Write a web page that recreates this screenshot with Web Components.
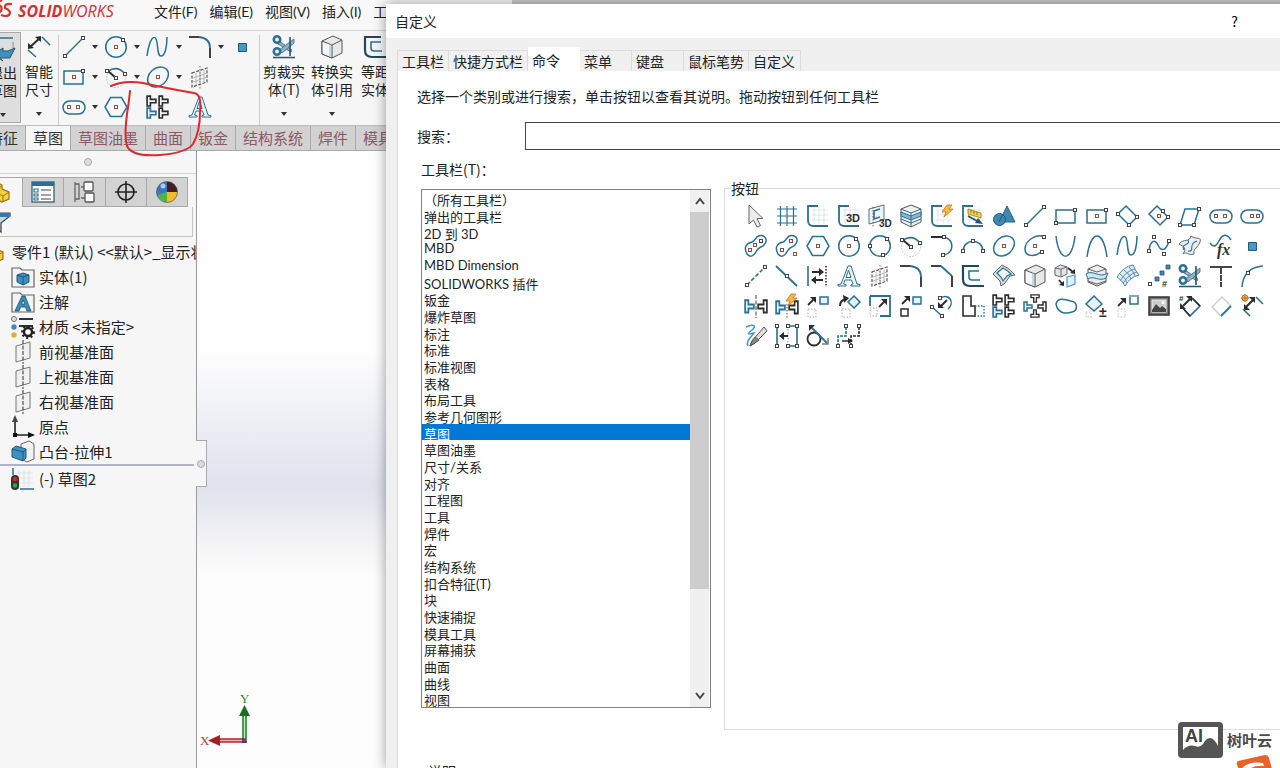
<!DOCTYPE html>
<html lang="zh-CN">
<head>
<meta charset="utf-8">
<title>SOLIDWORKS</title>
<style>
  body {
    margin: 0;
    font-family: "Noto Sans CJK SC", sans-serif;
    font-size: 14px;
    line-height: 20px;
    color: #222;
  }
</style>
</head>
<body>
<cad-app></cad-app>

<script>
const BLUE = '#2b7093';
const DARK = '#2c2c2c';

// drawing helpers, every icon lives in a 24x24 box
const line = (d, color = BLUE, width = 1.5, extra = '') =>
  `<path d="${d}" fill="none" stroke="${color}" stroke-width="${width}" ${extra}/>`;
const fill = (d, color, stroke = 'none', width = 1) =>
  `<path d="${d}" fill="${color}" stroke="${stroke}" stroke-width="${width}"/>`;
const grip = (...pts) => pts.map(([x, y]) =>
  `<rect x="${x - 1.5}" y="${y - 1.5}" width="3" height="3" fill="#fff" stroke="#444" stroke-width="1"/>`).join('');
const centre = (x, y) => `<rect x="${x - 1.5}" y="${y - 1.5}" width="3" height="3" fill="#fff" stroke="#8a4f46" stroke-width="1"/>`;
const label = (x, y, text, size = 9) =>
  `<text x="${x}" y="${y}" font-family="Liberation Sans, sans-serif" font-weight="bold" font-size="${size}" fill="${DARK}">${text}</text>`;
const bolt = (x, y) => fill(`M${x + 6} ${y}h5l-3 4h4l-9 8l2-5h-4z`, '#f6b93a', '#c1732a', .8);
const dots = 'stroke-dasharray="1.5 1.5"';
const grid = line('M6 6H22M6 11H22M6 16H22M8 3V20M13 3V20M18 3V20', '#d5dde2', .7);
const arrowNE = (x, y) => line(`M${x} ${y + 8}L${x + 6} ${y + 2}`, DARK, 1.8) + fill(`M${x + 8} ${y}v6l-6-6z`, DARK);
const sketchBase = line('M12 2H2V16.500Q2 22 7.500 22H22', BLUE, 1.8);
const tee = (t, c, f = 'none') =>
  `<path transform="${t}" d="M1 1h3v3h5v3h-5v3h-3z" fill="${f}" stroke="${c}" stroke-width="1.500"/>`;
const cubeBox = (x, y, s) =>
  fill(`M${x} ${y + s * .25}L${x + s * .45} ${y}L${x + s} ${y + s * .15}V${y + s * .75}L${x + s * .5} ${y + s}L${x} ${y + s * .85}Z`, '#e2e4e6', '#666', 1) +
  line(`M${x} ${y + s * .25}L${x + s * .5} ${y + s * .35}L${x + s} ${y + s * .15}M${x + s * .5} ${y + s * .35}V${y + s}`, '#666', 1);
const kidney = 'M3 20C-1 13 3 9 8 8C12 7 11 2 16 1.500C22 1 24 7 20 11C17 14 15 12 12.500 17C10 22 6 24 3 20Z';
const scissors =
  fill('M7 6L20 15L19 17L6 9Z', '#8fb3c6', '#3b687f', .8) + fill('M7 15L22 4L22 8L10 18Z', '#8fb3c6', '#3b687f', .8) +
  `<circle cx="5" cy="4.500" r="3.200" fill="none" stroke="${BLUE}" stroke-width="2.600"/><circle cx="5" cy="16.500" r="3.200" fill="none" stroke="${BLUE}" stroke-width="2.600"/>` +
  line('M18 2V21M1 22.500H23', '#28536b', 1.6);
const dimension = (c1, c2) => line('M3 12L13 3', c1, 2) + fill('M14 1v6l-6-5z', c1) + fill('M1 14V8l6 5z', c1) + line('M15 2L23 10M1 15L9 22', c2, 1.6);
const plane = (c) => fill('M5 6L19 2V18L5 22Z', '#f1f1f1', c, 1);

const ICONS = {
  select: fill('M5 1V20L9.500 16L13 23L16.500 21.500L13 14.500H19Z', '#ececec', '#666', 1),
  grid: line('M2 5H22M2 12H22M2 19H22M5.500 2V22M12 2V22M18.500 2V22', BLUE, 1.2),
  sketch: grid + sketchBase,
  sketch3d: grid + sketchBase + label(9, 18, '3D', 11),
  plane3d: fill('M1 5L16 1V16L1 20Z', '#eef3f6', '#557080') + line('M12 5L6 7V15L12 13', BLUE, 1.6) + line('M5 3V23', '#444', .8, dots) + label(11, 23, '3D', 10),
  layers: fill('M2 5L12 1L22 5V18L12 23L2 18Z', '#eaf1f5', '#555') + fill('M2 8L12 12L22 8V12L12 16L2 12Z', '#85b8d2', BLUE) + line('M2 5L12 9L22 5M12 9V23M2 15L12 19L22 15', '#467', 1),
  rapid: grid + sketchBase + bolt(11, 1),
  instant: grid + sketchBase + fill('M7 5L20 9V14L7 10Z', '#f5cf4b', '#9b7b19', .8) + line('M10 6v3M13 7v3M16 8v3', '#7a6016', .8) + line('M7 12L18 18', '#28536b', 1.8) + fill('M22 20L14 19L17 14Z', '#28536b'),
  shapes: fill('M15 2L23 18H7Z', '#3d88b4', '#2b6387') + `<circle cx="7.500" cy="15.500" r="6" fill="#3d88b4" stroke="#225877"/>` + line('M7 18L11 10', '#225877', 1),
  line: line('M2 22L21 3') + grip([3, 21], [21, 3]),
  rect: `<rect x="2" y="6" width="19" height="13" fill="none" stroke="${BLUE}" stroke-width="1.500"/>` + grip([2, 19], [21, 6]),
  rectc: `<rect x="2" y="6" width="19" height="13" fill="none" stroke="${BLUE}" stroke-width="1.500"/>` + centre(12, 12) + grip([21, 6]),
  rect3: line('M10 2L21 13L13 21L2 10Z') + grip([2, 10], [21, 13], [13, 21]),
  rect3c: line('M10 2L21 13L13 21L2 10Z') + centre(12, 12) + grip([16, 7], [21, 13]),
  para: line('M7 5H21L16 21H2Z') + grip([21, 5], [2, 21], [16, 21]),
  slot: `<rect x="1" y="6" width="22" height="13" rx="6.500" fill="none" stroke="${BLUE}" stroke-width="1.500"/>` + centre(7, 12) + centre(16, 12),
  slotc: `<rect x="1" y="6" width="22" height="13" rx="6.500" fill="none" stroke="${BLUE}" stroke-width="1.500"/>` + centre(12, 12) + centre(18, 12),
  kidney: line(kidney) + centre(6, 16) + centre(11, 11) + grip([17, 7]),
  kidney2: line(kidney) + centre(7, 16) + centre(16, 7) + centre(20, 20),
  polygon: line('M6.500 2.500H17.500L23 12L17.500 21.500H6.500L1 12Z') + centre(12, 12),
  circle: `<circle cx="12" cy="12" r="10.300" fill="none" stroke="${BLUE}" stroke-width="1.500"/>` + centre(12, 12) + grip([19, 5]),
  circle3: `<circle cx="12" cy="12" r="10.300" fill="none" stroke="${BLUE}" stroke-width="1.500"/>` + grip([2, 12], [19, 5], [15, 21]),
  arcc: `<circle cx="12" cy="13" r="9.500" fill="none" stroke="#bbb" ${dots}/>` + line('M4 6Q14 0 21 9') + line('M4 6L12 13', DARK, 2) + grip([3, 6], [12, 13], [21, 9]),
  arct: line('M1 3H14', DARK, 2) + line('M14 3C25 6 24 19 14 21') + grip([14, 3], [13, 21]),
  arc3: line('M2 17C3 4 21 4 22 17') + grip([2, 17], [12, 7], [22, 17]),
  ellipse: `<ellipse cx="12" cy="12" rx="11.500" ry="8.800" transform="rotate(-42 12 12)" fill="none" stroke="${BLUE}" stroke-width="1.500"/>` + centre(12, 12),
  pellipse: line('M21 3C13 -1 2 7 2 15C2 23 12 23 18 18') + centre(12, 12) + grip([21, 3], [19, 18]),
  parabola: line('M2 2C5 29 18 29 21 2'),
  conic: line('M2 23C6 -5 18 -5 22 23'),
  spline: line('M1 21C2 12 5 2 8.500 2.500C13 3 10 21 15 21C19 21 21 12 21 2'),
  splineh: line('M2 17C3 7 8 4 11 11C14 18 19 17 22 7') + grip([2, 17], [7, 3], [17, 20], [22, 7]),
  surf: fill('M1 10C6 4 11 9 13 2C18 6 24 2 22 8C20 14 15 14 16 20C10 22 9 17 5 20C9 14 6 13 1 10Z', '#eceff1', '#667', 1) + line('M6 16C2 9 13 12 10 6M10 17C18 18 9 10 19 7', BLUE, 1.2),
  equation: line('M1 9C5 15 8 11 11 5C15 -1 19 1 22 6') + `<text x="8" y="21" font-family="Liberation Serif, serif" font-style="italic" font-weight="bold" font-size="16" fill="#333">fx</text>`,
  point: fill('M8.500 8.500H16.500V16.500H8.500Z', '#4897c4', '#1f5b7e'),
  centerline: line('M3 21L21 3', BLUE, 1.6, 'stroke-dasharray="4 2"') + grip([3, 21], [21, 3]),
  midline: line('M1 2L22 22', BLUE, 1.8) + grip([12, 12]),
  between: line('M2 2V22', BLUE, 1.6) + line('M20 2V22', DARK, 1.5, dots) + line('M6 8H14M9 16H17', DARK, 2) + fill('M13 4L18 8L13 12Z', DARK) + fill('M10 12L5 16L10 20Z', DARK),
  text: fill('M1 22V20.500L4 20L11 2H14L20 20L23 20.500V22H14V20.500L16 20L14.500 16H8L6.500 20L9 20.500V22ZM9 13.500H14L11.500 6Z', '#eef5f9', BLUE, 1),
  plane: line('M4 8L19 3V17L4 22Z', '#555', 1.2, 'stroke-dasharray="3 1.500"') + line('M8 8V20M12 6V19M16 5V17M5 13L19 8M5 17L19 12', '#aaa', .8) + line('M12 1V24', '#555', .8, dots),
  fillet: line('M1 2H11', DARK, 1.8) + line('M11 2Q22 3 22 13', BLUE, 1.8) + line('M22 13V23', DARK, 1.8),
  chamfer: line('M1 2H11', DARK, 1.8) + line('M11 2L22 12', BLUE, 1.8) + line('M22 12V23', DARK, 1.8),
  offset: line('M18 2H2V15Q2 22 9 22H23', '#24475b', 2.2) + line('M18 7H8V13Q8 16 11 16H19', BLUE, 1.6),
  offsetsurf: fill('M1 10L10 1Q16 3 23 11L18 12L13 19L9 22L8 17Z', '#d8dfe3', '#566', 1) + fill('M5 9L11 4Q15 6 19 10L15 12L11 17L9 13Z', '#eef6fa', BLUE, 1.2),
  cube: fill('M2 6L13 1L22 5V18L12 23L2 19Z', '#e6e8ea', '#555') + fill('M2 6L12 10V23L2 19Z', '#f7f7f7', '#555') + line('M12 10L22 5', '#555', 1) + line('M10 9V22', '#8ec1dc', 1),
  convert: cubeBox(1, 1, 12) + fill('M13 13L21 11V20L13 23Z', '#dff0f8', '#4a9cc6', 1.2) + line('M14 4L19 8M5 16L9 21', DARK, 1.8) + fill('M21 10V5L16 9Z', DARK) + fill('M10 22V17L5 21Z', DARK),
  section: fill('M3 5L12 1L21 5V18L12 22L3 18Z', '#ececec', '#555') + fill('M1 10C8 5 14 15 23 9L21 14C14 18 8 11 3 15Z', '#cfe6f1', BLUE) + line('M3 5L12 8L21 5M3 17L12 20L21 17', '#666', 1),
  mesh: fill('M1 13Q8 2 17 1Q20 8 23 11Q14 13 9 22Q6 16 1 13Z', '#dcebf3', '#4e87a6') + line('M4 10Q10 14 11 19M8 6Q14 10 15 15M13 3Q18 8 19 12M4 17Q10 7 19 5M7 19Q13 10 21 8', '#4e87a6', .9),
  pattern: fill('M8 13h4v4h-4zM13 7h4v4h-4zM19 1h4v4h-4z', '#3f8ab3', '#28536b', .8) + grip([3, 20]) + label(15, 23, '#', 9),
  trim: scissors,
  tee: line('M1 3H23', '#333', 1.8) + line('M12 4V23', '#333', 1.8, 'stroke-dasharray="6 1"'),
  arc: line('M2 23C3 10 10 3 23 2') + grip([8, 9]),
  mirror: tee('translate(0 5) scale(1.1 1.35)', BLUE, '#e3f1f8') + tee('translate(24 5) scale(-1.1 1.35)', DARK) + line('M12 1V24', '#444', 1, 'stroke-dasharray="4 1.500"'),
  dmirror: tee('translate(0 6) scale(1.1 1.35)', BLUE, '#e3f1f8') + tee('translate(24 6) scale(-1.1 1.35)', DARK) + line('M12 10V24', '#444', 1, dots) + bolt(10, 0),
  move: arrowNE(2, 3) + `<rect x="14" y="3" width="8" height="7" fill="#e6f3fa" stroke="${BLUE}" stroke-width="1.500"/>` + line('M2 15H10V23H2Z', '#aaa', 1, dots),
  rotate: line('M3 12Q3 6 9 5', DARK, 2) + fill('M6 1L12 4L7 9Z', DARK) + fill('M17 2L23 8L17 14L11 8Z', '#e6f3fa', BLUE, 1.500) + line('M5 15H13V23H5Z', '#aaa', 1, dots),
  scale: line('M2 2H22V22H12M2 12V2', BLUE, 1.8) + arrowNE(11, 5) + line('M2 14H9V22H2Z', '#aaa', 1, dots),
  copy: arrowNE(3, 2) + `<rect x="14" y="3" width="8" height="7" fill="#e6f3fa" stroke="${BLUE}" stroke-width="1.500"/><rect x="2" y="15" width="7" height="7" fill="none" stroke="${DARK}" stroke-width="1.500"/>`,
  replace: line('M10 4C20 -1 25 9 18 15') + line('M2 13L12 22') + line('M17 6L11 12', DARK, 2) + fill('M8 14V8L14 14Z', DARK) + grip([10, 4], [2, 13], [12, 22]),
  stretchb: line('M2 2H10V12H14V22H2Z', DARK, 1.6) + line('M14 12H23V22H14', BLUE, 1.3, dots),
  lpattern: tee('translate(0 0) scale(1.1)', DARK) + tee('translate(12 0) scale(1.1)', DARK) + tee('translate(0 12) scale(1.1)', BLUE, '#dff0f8') + tee('translate(12 12) scale(1.1)', DARK),
  cpattern: tee('translate(0 7)', BLUE, '#dff0f8') + tee('translate(24 7) scale(-1 1)', DARK) + tee('translate(17 0) rotate(90) scale(.9)', DARK) + tee('translate(7 24) rotate(-90) scale(.9)', DARK),
  closed: line('M2 10C4 2 12 6 17 7C24 8 24 17 18 18C12 20 4 20 2 10Z'),
  modify: fill('M9 2L17 10L9 17L1 10Z', '#e6f3fa', BLUE, 1.500) + line('M1 18H6V23H1Z', '#bbb', 1, dots) + label(14, 23, '±', 14),
  copyd: arrowNE(2, 4) + line('M22 3V10H14V3', BLUE, 1.5) + line('M13 2H23', BLUE, 1.2) + line('M2 15H9V23H2Z', '#bbb', 1, dots),
  picture: `<rect x="2" y="3" width="20" height="18" fill="#777" stroke="#333" stroke-width="1.500"/><rect x="5" y="6" width="14" height="12" fill="#ccc" stroke="#eee"/>` + fill('M5 16L9 10L13 14L15 12L19 15V18H5Z', '#444') + `<circle cx="16" cy="8.500" r="1.500" fill="#fff"/>`,
  dimnum: line('M3 12L12 22L22 12L14 4', BLUE, 1.6) + line('M3 12L12 22M22 12L14 4', DARK, 1.5) + line('M5 12L12 5', DARK, 2) + fill('M14 2v6l-6-6z', DARK) + fill('M2 15V9l6 6z', DARK) + label(1, 7, '#', 8),
  dimfaint: line('M12 22L3 13L13 3L22 12', '#ccc', 1.4) + line('M22 12L12 22', BLUE, 1.8),
  dimauto: `<circle cx="5" cy="4" r="3" fill="#f6b050" stroke="#c1732a"/><path d="M5 0V8M1 4H9" stroke="#c1732a"/>` + line('M6 13L13 6', DARK, 2.2) + fill('M15 3v6l-6-6z', DARK) + fill('M4 16V10l6 6z', DARK) + line('M16 3L23 10M3 15L10 22', BLUE, 1.600),
  dim: dimension(DARK, BLUE),
  pencil: line('M2 3C8 0 14 1 8 6C2 11 4 10 10 9C5 15 2 18 4 22', '#4a96bf', 1.5) + fill('M20 3L23 7L11 19L6 22L8 17Z', '#ddd', '#555', 1) + fill('M11 13L15 16L11 19L6 22L8 17Z', '#8a8a8a', '#555', 1),
  stretch: line('M2 2V22M22 2V22M13 2H22M13 22H22', BLUE, 1.600) + line('M13 2V22', '#999', 1, dots) + line('M9 12H13', DARK, 2) + fill('M9 8V16L4 12Z', DARK) + grip([2, 2], [2, 22], [22, 2], [22, 22], [13, 2], [13, 22]),
  tangent: `<circle cx="8" cy="15" r="6.500" fill="none" stroke="${DARK}" stroke-width="1.800"/>` + line('M5 3L21 19', BLUE, 1.800) + fill('M3 1H9L3 7Z', DARK) + line('M22 14V20H16', '#777', 1.500),
  jog: line('M1 22V12H9V2', BLUE, 1.600, 'stroke-dasharray="3 1"') + line('M14 22V12H22V2', DARK, 1.600, 'stroke-dasharray="3 1"') + line('M5 17H12', DARK, 1.500) + fill('M11 14L16 17L11 20Z', DARK) + grip([1, 22], [14, 22], [9, 2], [22, 2]),
  exit: line('M2 2H22', BLUE, 1.5) + line('M22 6V12', '#888', 1) + fill('M24 12L19 22L8 22L12 25L3 18L12 12V15H17Z', '#3f91bd', '#28536b', 1),
  part: fill('M2 7L8 3L12 5V9L19 12V19L12 22L2 17Z', '#f4cf3e', '#9a7612', 1.2) + line('M2 7L7 9L12 6M7 9V13L13 16L19 12M13 16V22', '#9a7612', 1),
  property: `<rect x="1" y="2" width="22" height="20" fill="#fff" stroke="#28536b" stroke-width="1.200"/><rect x="1" y="2" width="22" height="4" fill="${BLUE}"/>` + fill('M3 9h4v3h-4zM3 14h4v2h-4zM3 18h4v2h-4z', '#fff', BLUE, 1.2) + line('M10 10H20M10 15H20M10 19H20', '#444', 1.2),
  config: line('M2 2V22M2 4H6V19H2M8 7H12M8 18H12', '#666', 1.3) + `<rect x="11" y="2" width="9" height="9" rx="1" fill="#fff" stroke="#555" stroke-width="1.300"/><rect x="12" y="13" width="9" height="9" rx="1" fill="#fff" stroke="#555" stroke-width="1.300"/>`,
  target: `<circle cx="12" cy="12" r="8" fill="none" stroke="#222" stroke-width="1.600"/>` + line('M12 1V23M1 12H23', '#222', 1.6),
  ball: fill('M12 12V1.500A10.500 10.500 0 0 0 1.500 12Z', '#3c74c4') + fill('M12 12V1.500A10.500 10.500 0 0 1 22.500 12Z', '#451d20') + fill('M12 12L3 17A10.500 10.500 0 0 1 1.500 12Z', '#3c74c4') + fill('M12 12L2 15Q5 22 13 22.500Z', '#4eb448') + fill('M12 12H22.500Q22 22 12 22.500Z', '#f1ba2f') + `<circle cx="8" cy="6" r="2.500" fill="#a9caec"/><circle cx="12" cy="12" r="10.500" fill="none" stroke="#444" stroke-width=".6"/>`,
  funnel: fill('M1 3H23V6L14 13V22L10 19V13L1 6Z', '#c9d5db', '#345', 1.200) + fill('M1 3H23V7H1Z', '#2f7ca8'),
  solids: fill('M1 3H9L11 5H23V22H1Z', '#f4f4f4', '#666', 1.200) + fill('M6 10L12 8L18 10V17L12 20L6 17Z', '#3d8ebc', '#1e5b7f') + line('M6 10L12 12L18 10M12 12V20', '#1e5b7f', 1),
  notes: fill('M1 3H9L11 5H23V22H1Z', '#f4f4f4', '#666', 1.200) + fill('M4 21L11 6H14L20 21H16L14.500 17H9.500L8 21ZM10.500 14H14L12 10Z', '#3d8ebc', '#1e4b67', .8),
  material: `<circle cx="3" cy="4" r="2.500" fill="#ddd" stroke="#777"/><circle cx="3" cy="12" r="2.700" fill="#3f87bd"/><circle cx="3" cy="20" r="2.700" fill="#e2ad36"/>` + line('M8 4H22M8 11H22', '#333', 2) + `<circle cx="17" cy="17" r="4" fill="#fff" stroke="#222" stroke-width="2.500"/><circle cx="17" cy="17" r="6" fill="none" stroke="#222" stroke-width="2" stroke-dasharray="2 2.500"/>`,
  refplane: plane('#777') + line('M12 0V24', '#333', 1, 'stroke-dasharray="4 1.500"'),
  origin: line('M4 4V20H21', '#222', 1.6) + fill('M4 0L7 7H1Z', '#444') + fill('M24 20L17 17V23Z', '#111') + fill('M2 18H6V22H2Z', '#111'),
  extrude: fill('M10 4L18 1L23 4V19L16 22L10 19Z', '#f2f2f2', '#666') + fill('M1 9L5 6L15 9V18L12 21L1 17Z', '#3f91bd', '#22587a') + line('M1 9L12 12L15 9M12 12V21', '#22587a', 1),
  sketchitem: grid + line('M2 1V8M9 22H23', BLUE, 1.5) + `<rect x="0" y="8" width="8" height="15" rx="4" fill="#333"/><circle cx="4" cy="12" r="2.300" fill="#d22"/><circle cx="4" cy="18.500" r="2.300" fill="#2a4"/>`,
};

class CadIcon extends HTMLElement {
  constructor() {
    super();
    this.attachShadow({ mode: 'open' });
  }
  connectedCallback() {
    this.shadowRoot.innerHTML = `
      <style>
        :host { display: block; width: 24px; height: 24px; flex: none; }
        svg { display: block; width: 100%; height: 100%; overflow: visible; }
      </style>
      <svg viewBox="0 0 24 24" aria-hidden="true">${ICONS[this.getAttribute('name')] || ''}</svg>
    `;
  }
}
customElements.define('cad-icon', CadIcon);

// small or large ribbon command, with an optional drop-down arrow
class CadCommand extends HTMLElement {
  constructor() {
    super();
    this.attachShadow({ mode: 'open' });
    this.shadowRoot.innerHTML = `
      <style>
        :host { display: block; }
        button {
          display: flex; align-items: center; padding: 0; border: 0; background: none;
          font: inherit; color: inherit; white-space: nowrap;
        }
        :host([large]) button { flex-direction: column; width: 100%; height: 88px; padding-bottom: 7px; box-sizing: border-box; }
        .label { line-height: 18px; text-align: center; }
        :host([large]) .label { padding-top: 3px; }
        i { display: none; border: 3px solid transparent; border-top: 4px solid #333; border-bottom: 0; }
        :host([drop]) i { display: block; margin-left: 6px; }
        :host([large]) i { margin: auto 0 0; }
      </style>
      <button type="button"><cad-icon></cad-icon><span class="label"><slot></slot></span><i></i></button>
    `;
  }
  connectedCallback() {
    this.shadowRoot.querySelector('cad-icon').setAttribute('name', this.getAttribute('icon'));
    this.shadowRoot.querySelector('button').setAttribute('aria-label', this.textContent || this.getAttribute('icon'));
    this.shadowRoot.querySelector('cad-icon').connectedCallback();
  }
}
customElements.define('cad-command', CadCommand);

class CadHeader extends HTMLElement {
  constructor() {
    super();
    this.attachShadow({ mode: 'open' });
    this.shadowRoot.innerHTML = `
      <style>
        :host { display: flex; height: 31px; border-bottom: 1px solid #d4d4d4; box-sizing: border-box; background: #f8f8f8; white-space: nowrap; }
        .logo { display: flex; flex: none; width: 146px; color: #d3302f; font: italic 16px/22px "Open Sans", sans-serif; }
        .logo svg { width: 18px; height: 22px; }
        nav { display: flex; flex: none; gap: 12px; width: 240px; box-sizing: border-box; padding: 2px 0 0 8px; overflow: hidden; font-family: Lato, "Noto Sans CJK SC", sans-serif; }
        nav a { color: inherit; text-decoration: none; }
        .quick { flex: 1; height: 5px; margin-left: 126px; background: #cbcbcb; overflow: hidden; }
      </style>
      <div class="logo">
        <svg viewBox="0 0 18 22"><path d="M-2 2L2 0M12 4Q4 3 5 8Q12 11 9 15Q6 17 1 15M-2 5Q3 6 1 11L-2 14" fill="none" stroke="#d3302f" stroke-width="2.200"/></svg>
        <span><b>SOLID</b>WORKS</span>
      </div>
      <nav>
        <a href="#">文件(F)</a><a href="#">编辑(E)</a><a href="#">视图(V)</a><a href="#">插入(I)</a><a href="#">工具(T)</a>
      </nav>
      <div class="quick">
        <svg width="780" height="5" viewBox="0 0 780 5">
          <path d="M38 4L45 0L52 4Z" fill="#2b7093"/>
          <path d="M74 5V1H86M90 1L96 5M226 5V2H238V5M192 4H196M322 5V0L327 4M392 5V1H406V5M430 4Q434 0 438 4M444 0V4" fill="none" stroke="#444"/>
          <path d="M168 5V0M172 5V0M182 5V0M186 5V0" stroke="#2b7093" stroke-width="2"/>
          <path d="M120 4Q128 0 134 2" fill="none" stroke="#3b9443" stroke-width="2"/>
          <path d="M363 5Q368 -4 375 5Z" fill="#7a2a2a"/>
          <path d="M474 0H780V5H474Z" fill="#ececec"/>
          <path d="M480 3H495" stroke="#333" stroke-width="2"/>
        </svg>
      </div>
    `;
  }
}
customElements.define('cad-header', CadHeader);

class CadRibbon extends HTMLElement {
  constructor() {
    super();
    this.attachShadow({ mode: 'open' });
    this.shadowRoot.innerHTML = `
      <style>
        :host { display: block; background: #f6f6f6; overflow: hidden; white-space: nowrap; }
        .tools { display: flex; height: 94px; box-sizing: border-box; padding-top: 4px; }
        .tools > * { flex: none; }
        .exit { width: 36px; margin: -3px 4px 2px -15px; padding-top: 3px; background: #dedede; border: 1px solid #a9a9a9; box-sizing: border-box; }
        .dim { width: 28px; padding-right: 5px; border-right: 1px solid #ccc; }
        .small { display: grid; grid-template-columns: repeat(5, 42px); grid-auto-rows: 24px; gap: 6px 0; padding-left: 3px; width: 197px; border-right: 1px solid #ccc; }
        .big { width: 48px; }
        .big:last-child { width: 38px; }
        .tabs { display: flex; height: 26px; box-sizing: border-box; border-top: 1px solid #bcbcbc; border-bottom: 1px solid #aaa; background: #cfcfcf; font-size: 15px; }
        .tabs button { flex: none; padding: 0 7px; border: 0; border-right: 1px solid #aaa; background: #d2d2d2; color: #8c5866; font: inherit; }
        .tabs button:first-child { margin-left: -19px; color: #333; }
        .tabs button[aria-selected=true] { background: #f6f6f6; color: #333; }
      </style>
      <div class="tools">
        <cad-command class="exit" large drop icon="exit">退出<br>草图</cad-command>
        <cad-command class="dim" large drop icon="dim">智能<br>尺寸</cad-command>
        <div class="small">
          <cad-command drop icon="line"></cad-command><cad-command drop icon="circle"></cad-command><cad-command drop icon="spline"></cad-command><cad-command drop icon="fillet"></cad-command><cad-command icon="point"></cad-command>
          <cad-command drop icon="rectc"></cad-command><cad-command drop icon="arcc"></cad-command><cad-command drop icon="ellipse"></cad-command><cad-command icon="plane"></cad-command><span></span>
          <cad-command drop icon="slot"></cad-command><cad-command icon="polygon"></cad-command><cad-command icon="lpattern"></cad-command><cad-command icon="text"></cad-command>
        </div>
        <cad-command class="big" large drop icon="trim">剪裁实<br>体(T)</cad-command>
        <cad-command class="big" large drop icon="cube">转换实<br>体引用</cad-command>
        <cad-command class="big" large icon="offset">等距<br>实体</cad-command>
      </div>
      <div class="tabs" role="tablist">
        ${['特征', '草图', '草图油墨', '曲面', '钣金', '结构系统', '焊件', '模具工具'].map((t) =>
          `<button type="button" role="tab" aria-selected="${t === '草图'}">${t}</button>`).join('')}
      </div>
    `;
  }
}
customElements.define('cad-ribbon', CadRibbon);

class CadTreeItem extends HTMLElement {
  constructor() {
    super();
    this.attachShadow({ mode: 'open' });
  }
  connectedCallback() {
    this.shadowRoot.innerHTML = `
      <style>
        :host { display: flex; align-items: center; gap: 4px; height: 25px; padding-left: 11px; font-size: 15px; white-space: nowrap; }
        :host([root]) { margin-left: -27px; }
      </style>
      <cad-icon name="${this.getAttribute('icon')}"></cad-icon><span><slot></slot></span>
    `;
  }
}
customElements.define('cad-tree-item', CadTreeItem);

class CadPanel extends HTMLElement {
  constructor() {
    super();
    this.attachShadow({ mode: 'open' });
    this.shadowRoot.innerHTML = `
      <style>
        :host { display: block; background: #f6f6f6; border-right: 1px solid #9a9a9a; overflow: hidden; }
        .grab { display: flex; justify-content: center; align-items: center; height: 22px; padding-right: 20px; border-bottom: 1px solid #d5d5d5; }
        .grab i { width: 6px; height: 6px; border: 1px solid #aaa; border-radius: 50%; background: #ddd; }
        .tabs { display: flex; margin: 3px 8px 0 -19px; border-right: 1px solid #aaa; }
        .tabs button { display: flex; flex: 1; justify-content: center; align-items: center; height: 30px; padding: 0; border: 1px solid #a9a9a9; border-right: 0; background: #d2d2d2; }
        .tabs button:first-child { background: #f6f6f6; border-bottom-color: #f6f6f6; }
        .filter { display: flex; align-items: center; height: 29px; margin: 0 3px 0 -14px; border: 1px solid #c4c4c4; border-top: 0; }
        .filter input { flex: 1; min-width: 0; border: 0; background: none; font: inherit; }
        .tree { padding: 2px 2px 0 0; overflow: hidden; }
      </style>
      <div class="grab"><i></i></div>
      <div class="tabs">
        ${['part', 'property', 'config', 'target', 'ball'].map((n) =>
          `<button type="button" aria-label="${n}"><cad-icon name="${n}"></cad-icon></button>`).join('')}
      </div>
      <label class="filter"><cad-icon name="funnel"></cad-icon><input type="text" aria-label="filter"></label>
      <div class="tree"><slot></slot></div>
    `;
  }
}
customElements.define('cad-panel', CadPanel);

class CadViewport extends HTMLElement {
  constructor() {
    super();
    this.attachShadow({ mode: 'open' });
    this.shadowRoot.innerHTML = `
      <style>
        :host { display: block; position: relative; background: linear-gradient(#fefefe 32%, #f0f1f6 42%, #e0e3ee 54%, #e2e4ee 56%, #f1f1f4 62%, #fdfdfd 69%); }
        .handle { position: absolute; left: -1px; top: 289px; width: 11px; height: 47px; display: flex; align-items: center; background: #f6f6f6; border: 1px solid #a9a9a9; border-left: 0; box-sizing: border-box; }
        .handle i { width: 6px; height: 6px; margin-left: 1px; border: 1px solid #aaa; border-radius: 50%; background: #ddd; }
        svg { position: absolute; left: 0; bottom: 11px; overflow: visible; }
      </style>
      <div class="handle"><i></i></div>
      <svg width="60" height="60" viewBox="0 0 60 60" font-family="Liberation Serif, serif" font-size="13">
        <path d="M46 18V44H49V18Z" fill="#c8f0c8" stroke="#1c7a22" stroke-width="1.500"/>
        <path d="M47.500 8L53 19H42Z" fill="#176e1d"/>
        <path d="M22 42H48V45H22Z" fill="#f2b0b0" stroke="#b0242c" stroke-width="1.500"/>
        <path d="M11 43.500L23 38V49Z" fill="#a61f26"/>
        <path d="M46 45H50M46 41V46" stroke="#2b2b9a" stroke-width="1.500"/>
        <text x="3" y="48" fill="#c33">X</text>
        <text x="43" y="6" fill="#2a8a30">Y</text>
      </svg>
    `;
  }
}
customElements.define('cad-viewport', CadViewport);

const CATEGORIES = ['（所有工具栏）', '弹出的工具栏', '2D 到 3D', 'MBD', 'MBD Dimension', 'SOLIDWORKS 插件', '钣金', '爆炸草图',
  '标注', '标准', '标准视图', '表格', '布局工具', '参考几何图形', '草图', '草图油墨', '尺寸/关系', '对齐', '工程图', '工具', '焊件', '宏',
  '结构系统', '扣合特征(T)', '块', '快速捕捉', '模具工具', '屏幕捕获', '曲面', '曲线', '视图'];

// list box with its own scroll bar drawn next to it
class CadListbox extends HTMLElement {
  constructor() {
    super();
    this.attachShadow({ mode: 'open' });
    this.shadowRoot.innerHTML = `
      <style>
        :host { display: block; }
        label { display: block; margin-bottom: 10px; }
        .box { display: flex; border: 1px solid #828282; background: #fff; }
        select { flex: 1; min-width: 0; height: 517px; padding: 0; border: 0; outline: 0; background: #fff; overflow: hidden; font-family: Lato, "Noto Sans CJK SC", sans-serif; font-size: 13px; color: inherit; scrollbar-width: none; }
        option { height: 17px; min-height: 0; padding: 0 2px; line-height: 17px; box-sizing: border-box; color: #222; }
        option:nth-child(3n) { height: 16px; line-height: 16px; }
        option:checked { background: #0078d7 linear-gradient(#0078d7, #0078d7); color: #fff !important; }
        .bar { display: flex; flex-direction: column; width: 19px; margin-right: 1px; background: #f0f0f0; }
        .bar button { height: 22px; padding: 0; border: 0; background: none; }
        .thumb { flex: 0 0 377px; background: #cdcdcd; }
        .bar button:last-child { margin-top: auto; }
        svg { display: block; margin: auto; }
      </style>
      <label for="list">工具栏(T)：</label>
      <div class="box">
        <select id="list" size="31">
          ${CATEGORIES.map((c) => `<option${c === '草图' ? ' selected' : ''}>${c}</option>`).join('')}
        </select>
        <div class="bar">
          <button type="button" aria-label="up"><svg width="10" height="8"><path d="M1 7L5 2L9 7" fill="none" stroke="#444" stroke-width="2"/></svg></button>
          <div class="thumb"></div>
          <button type="button" aria-label="down"><svg width="10" height="8"><path d="M1 1L5 6L9 1" fill="none" stroke="#444" stroke-width="2"/></svg></button>
        </div>
      </div>
    `;
  }
}
customElements.define('cad-listbox', CadListbox);

const COMMANDS = [
  'select grid sketch sketch3d plane3d layers rapid instant shapes line rect rectc rect3 rect3c para slot slotc',
  'kidney kidney2 polygon circle circle3 arcc arct arc3 ellipse pellipse parabola conic spline splineh surf equation point',
  'centerline midline between text plane fillet chamfer offset offsetsurf cube convert section mesh pattern trim tee arc',
  'mirror dmirror move rotate scale copy replace stretchb lpattern cpattern closed modify copyd picture dimnum dimfaint dimauto',
  'pencil stretch tangent jog',
].join(' ').split(' ');

class CadPalette extends HTMLElement {
  constructor() {
    super();
    this.attachShadow({ mode: 'open' });
    this.shadowRoot.innerHTML = `
      <style>
        :host { display: flex; }
        fieldset { flex: 1; min-width: 0; margin: 0; padding: 6px 0 0 19px; border: 1px solid #dcdcdc; }
        legend { margin-left: -13px; padding: 0; background: #fff; }
        .icons { display: grid; grid-template-columns: repeat(17, 24px); gap: 6px 7px; }
        button { display: block; padding: 0; border: 0; background: none; }
      </style>
      <fieldset>
        <legend>按钮</legend>
        <div class="icons">
          ${COMMANDS.map((n) => `<button type="button" aria-label="${n}"><cad-icon name="${n}"></cad-icon></button>`).join('')}
        </div>
      </fieldset>
    `;
  }
}
customElements.define('cad-palette', CadPalette);

class CadDialog extends HTMLElement {
  constructor() {
    super();
    this.attachShadow({ mode: 'open' });
    this.shadowRoot.innerHTML = `
      <style>
        :host { display: flex; flex-direction: column; background: #f0f0f0; box-shadow: 0 0 12px rgba(0, 0, 0, .4); overflow: hidden; }
        header { display: flex; flex: none; justify-content: space-between; height: 34px; line-height: 34px; padding: 0 66px 0 9px; background: #fff; }
        header button { padding: 0; border: 0; background: none; font: inherit; }
        .tabs { display: flex; flex: none; align-items: flex-end; height: 33px; padding-left: 11px; }
        .tabs button { min-width: 52px; height: 21px; padding: 0 4px; border: 1px solid #dcdcdc; border-width: 1px 1px 0 0; background: #f0f0f0; font: inherit; color: inherit; text-align: left; line-height: 20px; }
        .tabs button:first-child { border-left-width: 1px; }
        .tabs button[aria-selected=true] { height: 24px; background: #fff; border-color: #fff; }
        .page { flex: 1 0 auto; margin-left: 11px; padding: 15px 0 0 19px; background: #fff; border-left: 1px solid #dcdcdc; }
        p { margin: 0 0 16px; }
        .search { display: flex; align-items: center; margin-bottom: 9px; }
        .search label { width: 108px; }
        .search input { flex: 1; height: 28px; box-sizing: border-box; border: 1px solid #444; background: #fff; font: inherit; }
        .columns { display: flex; gap: 13px; margin: 0 0 31px 4px; }
        cad-listbox { width: 290px; padding-bottom: 22px; }
        cad-palette { flex: 1; margin-top: 19px; }
        .note { padding-left: 11px; }
      </style>
      <header><slot name="title"></slot><button type="button">?</button></header>
      <div class="tabs" role="tablist">
        ${['工具栏', '快捷方式栏', '命令', '菜单', '键盘', '鼠标笔势', '自定义'].map((t) =>
          `<button type="button" role="tab" aria-selected="${t === '命令'}">${t}</button>`).join('')}
      </div>
      <div class="page">
        <p><slot></slot></p>
        <div class="search"><label for="q">搜索：</label><input id="q" type="text"></div>
        <div class="columns"><cad-listbox></cad-listbox><cad-palette></cad-palette></div>
        <div class="note">说明</div>
      </div>
    `;
  }
}
customElements.define('cad-dialog', CadDialog);

class CadWatermark extends HTMLElement {
  constructor() {
    super();
    this.attachShadow({ mode: 'open' });
    this.shadowRoot.innerHTML = `
      <style>
        :host { display: flex; align-items: center; gap: 4px; color: #4b4b4b; font-size: 15px; font-weight: bold; }
        .brand { position: absolute; left: 58px; top: 31px; }
      </style>
      <svg width="45" height="36" viewBox="0 0 45 36">
        <rect width="45" height="36" rx="4" fill="#555"/>
        <path d="M5 5H40V24Q36 16 32 16Q28 16 25 22Q22 26 17 24Q10 22 5 28Z" fill="#fff"/>
        <text x="7" y="20" font-family="Liberation Sans, sans-serif" font-size="18" font-weight="bold" fill="#444">AI</text>
      </svg>
      <span><slot></slot></span>
      <svg class="brand" width="40" height="20" viewBox="0 0 40 20">
        <path d="M2 8L29 2Q32 2 33 5L37 20H5L1 12Q0 9 2 8Z" fill="#e8622c"/>
        <path d="M6 15Q14 8 27 10L28 13Q16 12 12 18H7Z" fill="#fff"/>
      </svg>
    `;
  }
}
customElements.define('cad-watermark', CadWatermark);

class CadApp extends HTMLElement {
  constructor() {
    super();
    this.attachShadow({ mode: 'open' });
    this.shadowRoot.innerHTML = `
      <style>
        :host { display: flex; flex-direction: column; position: relative; height: 100vh; overflow: hidden; }
        main { flex: 1; display: flex; min-height: 0; }
        cad-panel { width: 196px; flex: none; }
        cad-viewport { flex: 1; }
        hr { height: 2px; margin: 0; border: 0; background: #b0b3c4; }
        cad-dialog { position: absolute; left: 386px; top: 4px; right: -24px; bottom: 0; }
        cad-watermark { position: absolute; right: 8px; bottom: 10px; }
        .markup { position: absolute; left: 100px; top: 70px; pointer-events: none; }
      </style>
      <cad-header></cad-header>
      <cad-ribbon></cad-ribbon>
      <main>
        <cad-panel>
          <cad-tree-item root icon="part">零件1 (默认) &lt;&lt;默认&gt;_显示状态 1&gt;</cad-tree-item>
          <cad-tree-item icon="solids">实体(1)</cad-tree-item>
          <cad-tree-item icon="notes">注解</cad-tree-item>
          <cad-tree-item icon="material">材质 &lt;未指定&gt;</cad-tree-item>
          <cad-tree-item icon="refplane">前视基准面</cad-tree-item>
          <cad-tree-item icon="refplane">上视基准面</cad-tree-item>
          <cad-tree-item icon="refplane">右视基准面</cad-tree-item>
          <cad-tree-item icon="origin">原点</cad-tree-item>
          <cad-tree-item icon="extrude">凸台-拉伸1</cad-tree-item>
          <hr>
          <cad-tree-item icon="sketchitem">(-) 草图2</cad-tree-item>
        </cad-panel>
        <cad-viewport></cad-viewport>
      </main>
      <svg class="markup" width="110" height="90" viewBox="0 0 110 90" fill="none" stroke="#dc2a2c" stroke-width="2" stroke-linecap="round">
        <path d="M11 16Q24 10 43 13Q70 19 94 23Q102 24 100 42Q100 62 93 74Q86 83 60 85Q32 87 27 76Q24 66 27 44Q29 32 30 21"/>
      </svg>
      <cad-dialog>
        <span slot="title">自定义</span>
        选择一个类别或进行搜索，单击按钮以查看其说明。拖动按钮到任何工具栏
      </cad-dialog>
      <cad-watermark>树叶云</cad-watermark>
    `;
  }
}
customElements.define('cad-app', CadApp);
</script>
</body>
</html>
